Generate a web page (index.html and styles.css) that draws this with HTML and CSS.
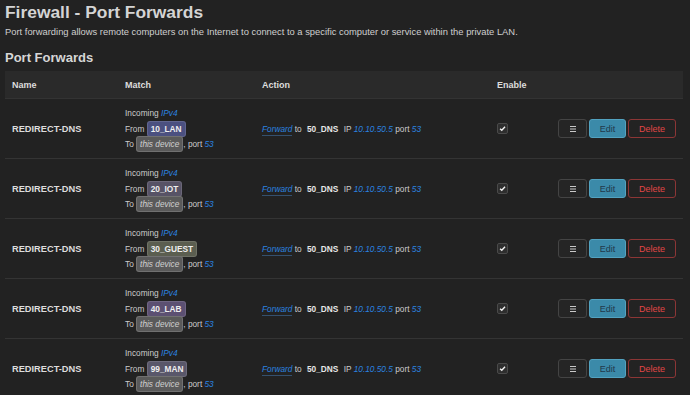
FILE: index.html
```html
<!DOCTYPE html>
<html>
<head>
<meta charset="utf-8">
<link rel="stylesheet" href="styles.css">
</head>
<body>
<h2 class="title">Firewall - Port Forwards</h2>
<p class="desc">Port forwarding allows remote computers on the Internet to connect to a specific computer or service within the private LAN.</p>
<h3 class="section">Port Forwards</h3>
<table class="fw">
  <colgroup>
    <col class="c-name"><col class="c-match"><col class="c-action"><col class="c-en"><col class="c-btns">
  </colgroup>
  <thead>
    <tr><th>Name</th><th>Match</th><th>Action</th><th>Enable</th><th></th></tr>
  </thead>
  <tbody>
    <tr>
      <td class="name">REDIRECT-DNS</td>
      <td class="match">
        <div class="ln">Incoming&nbsp;<i class="lnk">IPv4</i></div>
        <div class="ln">From&nbsp;<span class="zone z-lan">10_LAN</span></div>
        <div class="ln">To&nbsp;<span class="dev">this device</span>, port&nbsp;<i class="lnk">53</i></div>
      </td>
      <td class="action"><span class="fwd">Forward</span> to <b class="dz">50_DNS</b> IP <i class="lnk">10.10.50.5</i> port <i class="lnk">53</i></td>
      <td class="en"><span class="cb"><svg viewBox="0 0 10 10" width="10" height="10"><path d="M2.3 5.2 L4.2 7 L7.8 3" fill="none" stroke="#f0f0f0" stroke-width="1.5"/></svg></span></td>
      <td class="btns"><div class="bgrp"><button class="btn drag"><svg viewBox="0 0 8 8" width="8" height="8"><path d="M1 1.5H7M1 4H7M1 6.5H7" stroke="#c8c8c8" stroke-width="1.2"/></svg></button><button class="btn edit">Edit</button><button class="btn del">Delete</button></div></td>
    </tr>
    <tr>
      <td class="name">REDIRECT-DNS</td>
      <td class="match">
        <div class="ln">Incoming&nbsp;<i class="lnk">IPv4</i></div>
        <div class="ln">From&nbsp;<span class="zone z-iot">20_IOT</span></div>
        <div class="ln">To&nbsp;<span class="dev">this device</span>, port&nbsp;<i class="lnk">53</i></div>
      </td>
      <td class="action"><span class="fwd">Forward</span> to <b class="dz">50_DNS</b> IP <i class="lnk">10.10.50.5</i> port <i class="lnk">53</i></td>
      <td class="en"><span class="cb"><svg viewBox="0 0 10 10" width="10" height="10"><path d="M2.3 5.2 L4.2 7 L7.8 3" fill="none" stroke="#f0f0f0" stroke-width="1.5"/></svg></span></td>
      <td class="btns"><div class="bgrp"><button class="btn drag"><svg viewBox="0 0 8 8" width="8" height="8"><path d="M1 1.5H7M1 4H7M1 6.5H7" stroke="#c8c8c8" stroke-width="1.2"/></svg></button><button class="btn edit">Edit</button><button class="btn del">Delete</button></div></td>
    </tr>
    <tr>
      <td class="name">REDIRECT-DNS</td>
      <td class="match">
        <div class="ln">Incoming&nbsp;<i class="lnk">IPv4</i></div>
        <div class="ln">From&nbsp;<span class="zone z-guest">30_GUEST</span></div>
        <div class="ln">To&nbsp;<span class="dev">this device</span>, port&nbsp;<i class="lnk">53</i></div>
      </td>
      <td class="action"><span class="fwd">Forward</span> to <b class="dz">50_DNS</b> IP <i class="lnk">10.10.50.5</i> port <i class="lnk">53</i></td>
      <td class="en"><span class="cb"><svg viewBox="0 0 10 10" width="10" height="10"><path d="M2.3 5.2 L4.2 7 L7.8 3" fill="none" stroke="#f0f0f0" stroke-width="1.5"/></svg></span></td>
      <td class="btns"><div class="bgrp"><button class="btn drag"><svg viewBox="0 0 8 8" width="8" height="8"><path d="M1 1.5H7M1 4H7M1 6.5H7" stroke="#c8c8c8" stroke-width="1.2"/></svg></button><button class="btn edit">Edit</button><button class="btn del">Delete</button></div></td>
    </tr>
    <tr>
      <td class="name">REDIRECT-DNS</td>
      <td class="match">
        <div class="ln">Incoming&nbsp;<i class="lnk">IPv4</i></div>
        <div class="ln">From&nbsp;<span class="zone z-lab">40_LAB</span></div>
        <div class="ln">To&nbsp;<span class="dev">this device</span>, port&nbsp;<i class="lnk">53</i></div>
      </td>
      <td class="action"><span class="fwd">Forward</span> to <b class="dz">50_DNS</b> IP <i class="lnk">10.10.50.5</i> port <i class="lnk">53</i></td>
      <td class="en"><span class="cb"><svg viewBox="0 0 10 10" width="10" height="10"><path d="M2.3 5.2 L4.2 7 L7.8 3" fill="none" stroke="#f0f0f0" stroke-width="1.5"/></svg></span></td>
      <td class="btns"><div class="bgrp"><button class="btn drag"><svg viewBox="0 0 8 8" width="8" height="8"><path d="M1 1.5H7M1 4H7M1 6.5H7" stroke="#c8c8c8" stroke-width="1.2"/></svg></button><button class="btn edit">Edit</button><button class="btn del">Delete</button></div></td>
    </tr>
    <tr>
      <td class="name">REDIRECT-DNS</td>
      <td class="match">
        <div class="ln">Incoming&nbsp;<i class="lnk">IPv4</i></div>
        <div class="ln">From&nbsp;<span class="zone z-man">99_MAN</span></div>
        <div class="ln">To&nbsp;<span class="dev">this device</span>, port&nbsp;<i class="lnk">53</i></div>
      </td>
      <td class="action"><span class="fwd">Forward</span> to <b class="dz">50_DNS</b> IP <i class="lnk">10.10.50.5</i> port <i class="lnk">53</i></td>
      <td class="en"><span class="cb"><svg viewBox="0 0 10 10" width="10" height="10"><path d="M2.3 5.2 L4.2 7 L7.8 3" fill="none" stroke="#f0f0f0" stroke-width="1.5"/></svg></span></td>
      <td class="btns"><div class="bgrp"><button class="btn drag"><svg viewBox="0 0 8 8" width="8" height="8"><path d="M1 1.5H7M1 4H7M1 6.5H7" stroke="#c8c8c8" stroke-width="1.2"/></svg></button><button class="btn edit">Edit</button><button class="btn del">Delete</button></div></td>
    </tr>
  </tbody>
</table>
</body>
</html>
```

FILE: styles.css
```css
html, body {
  margin: 0;
  padding: 0;
  background: #222222;
}
body {
  padding: 0 5px;
  font-family: "Liberation Sans", Arial, sans-serif;
  color: #cccccc;
  overflow: hidden;
}
.title {
  margin: 0;
  padding-top: 1px;
  font-size: 17.4px;
  line-height: 22px;
  font-weight: bold;
  color: #d4d4d4;
}
.desc {
  margin: 3px 0 0;
  font-size: 9.4px;
  line-height: 12px;
  color: #cfcfcf;
}
.section {
  margin: 12px 0 5px;
  font-size: 13px;
  line-height: 16px;
  font-weight: bold;
  color: #d6d6d6;
}
.fw {
  width: 678px;
  border-collapse: collapse;
  table-layout: fixed;
}
.c-name { width: 113px; }
.c-match { width: 137px; }
.c-action { width: 235px; }
.c-en { width: 60px; }
.fw th {
  background: #2a2a2a;
  height: 27px;
  padding: 0 7px;
  text-align: left;
  font-size: 9px;
  font-weight: bold;
  color: #dddddd;
  vertical-align: middle;
  border-bottom: 1px solid #333333;
}
.fw td {
  height: 59px;
  padding: 0 7px;
  vertical-align: middle;
  border-top: 1px solid #343434;
  font-size: 8.3px;
  color: #cccccc;
}
.fw tbody tr:first-child td { border-top: none; }
.fw td.name {
  font-size: 9.25px;
  font-weight: bold;
  color: #dddddd;
}
.ln {
  display: flex;
  align-items: center;
  height: 15.5px;
  white-space: nowrap;
}
.lnk {
  color: #2b82e0;
  font-style: italic;
}
.zone {
  display: inline-block;
  padding: 0 3px;
  height: 14px;
  line-height: 14px;
  border-radius: 3px;
  border: 1px solid rgba(255,255,255,0.12);
  font-weight: bold;
  color: #eeeeee;
}
.z-lan { background: #4b5080; }
.z-iot { background: #575366; }
.z-guest { background: #5b5e50; }
.z-lab { background: #5c5072; }
.z-man { background: #59576a; }
.dev {
  display: inline-block;
  padding: 0 3px;
  height: 14px;
  line-height: 14px;
  border-radius: 3px;
  border: 1px solid rgba(255,255,255,0.14);
  background: #5a5a5a;
  font-style: italic;
  color: #d0d0d0;
}
.action {
  white-space: nowrap;
}
.fwd {
  color: #2b82e0;
  font-style: italic;
  border-bottom: 1px solid #34506e;
  padding-bottom: 1px;
}
.dz {
  padding: 0 3px;
  color: #e6e6e6;
}
.cb {
  display: inline-flex;
  align-items: center;
  justify-content: center;
  width: 9px;
  height: 9px;
  background: #2e2e2e;
  border: 1px solid #4a4a4a;
  border-radius: 2px;
  vertical-align: middle;
}
.cb svg { width: 9px; height: 9px; }
.btns { text-align: right; }
.bgrp {
  display: flex;
  justify-content: flex-end;
  gap: 2px;
}
.btn {
  height: 19px;
  margin: 0;
  padding: 0;
  border-radius: 3px;
  font-family: "Liberation Sans", Arial, sans-serif;
  font-size: 9px;
  display: flex;
  align-items: center;
  justify-content: center;
}
.drag {
  width: 29px;
  background: #252525;
  border: 1px solid #444444;
}
.edit {
  width: 37px;
  background: #3b8aa9;
  border: 1px solid #52a2c0;
  color: #22384a;
}
.del {
  width: 48px;
  background: #232323;
  border: 1px solid #8c3636;
  color: #e04646;
}
```
